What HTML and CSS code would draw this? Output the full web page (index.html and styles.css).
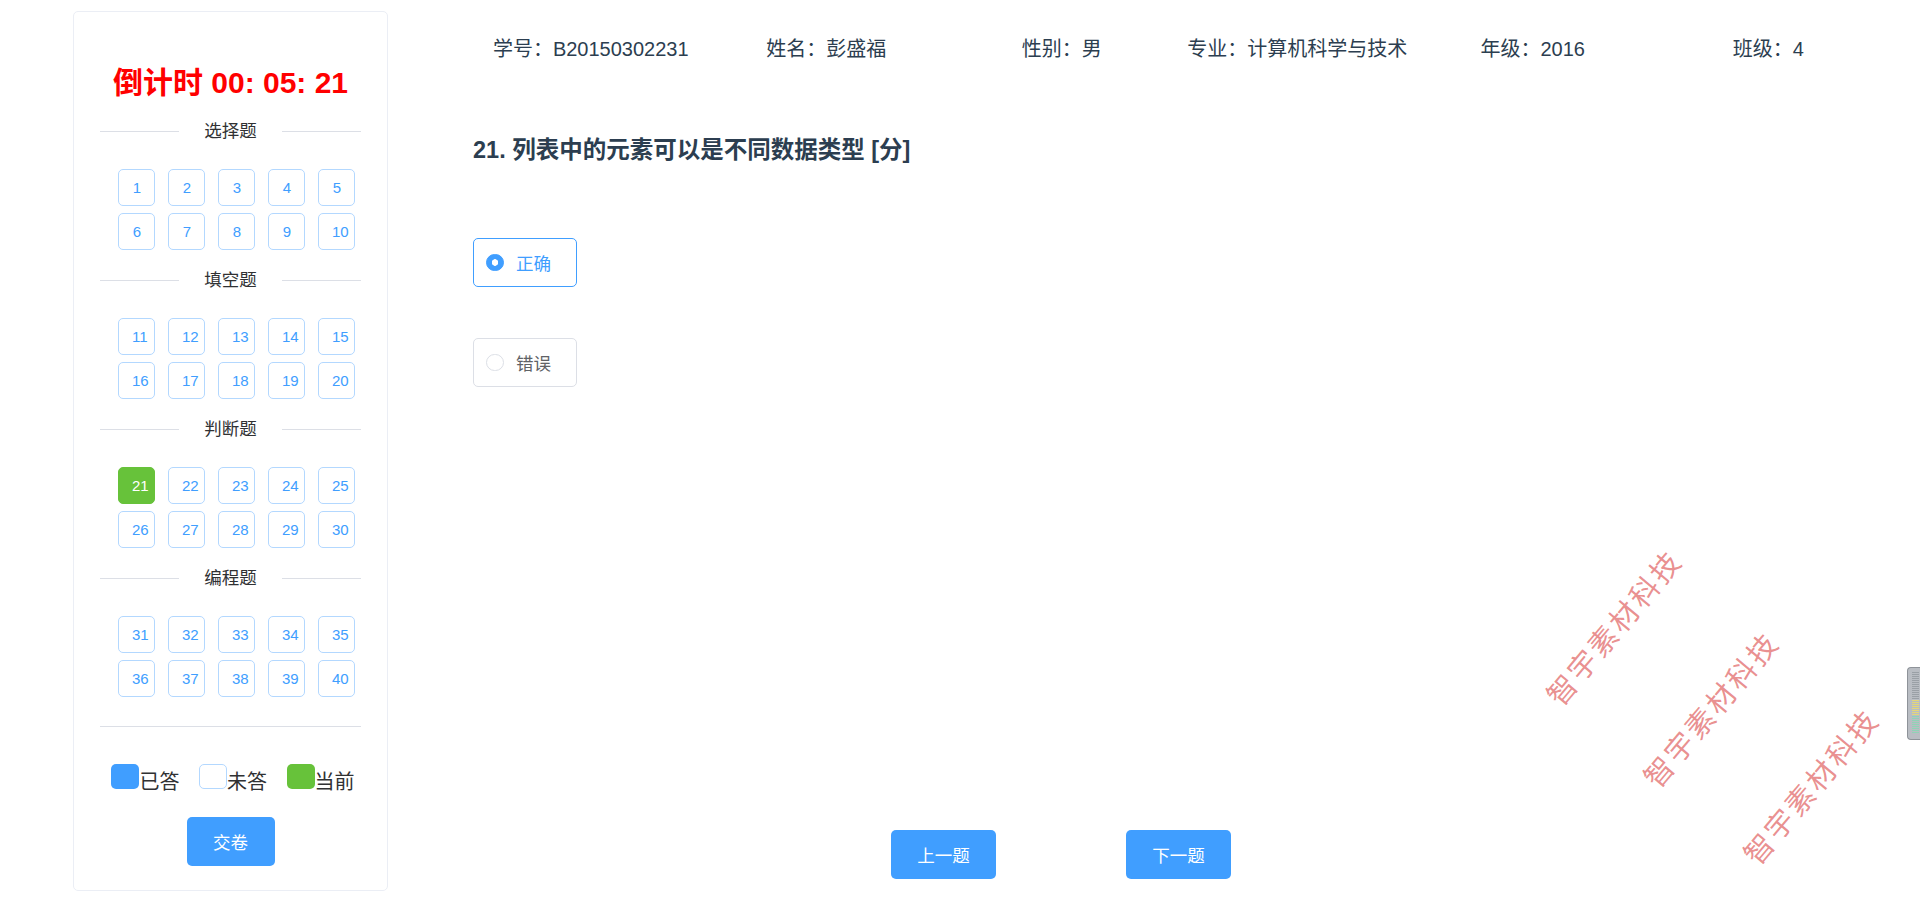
FILE: index.html
```html
<!DOCTYPE html>
<html lang="zh-CN">
<head>
    <meta charset="UTF-8">
    <title>在线考试</title>
    <link rel="stylesheet" href="styles.css">
</head>
<body>
    <div class="page">
        <aside class="card">
            <div class="timer">倒计时 00: 05: 21</div>

            <div class="divider"><span>选择题</span></div>
            <div class="qgrid">
                <div class="qbtn">1</div><div class="qbtn">2</div><div class="qbtn">3</div><div class="qbtn">4</div><div class="qbtn">5</div>
                <div class="qbtn">6</div><div class="qbtn">7</div><div class="qbtn">8</div><div class="qbtn">9</div><div class="qbtn">10</div>
            </div>

            <div class="divider"><span>填空题</span></div>
            <div class="qgrid">
                <div class="qbtn">11</div><div class="qbtn">12</div><div class="qbtn">13</div><div class="qbtn">14</div><div class="qbtn">15</div>
                <div class="qbtn">16</div><div class="qbtn">17</div><div class="qbtn">18</div><div class="qbtn">19</div><div class="qbtn">20</div>
            </div>

            <div class="divider"><span>判断题</span></div>
            <div class="qgrid">
                <div class="qbtn current">21</div><div class="qbtn">22</div><div class="qbtn">23</div><div class="qbtn">24</div><div class="qbtn">25</div>
                <div class="qbtn">26</div><div class="qbtn">27</div><div class="qbtn">28</div><div class="qbtn">29</div><div class="qbtn">30</div>
            </div>

            <div class="divider"><span>编程题</span></div>
            <div class="qgrid">
                <div class="qbtn">31</div><div class="qbtn">32</div><div class="qbtn">33</div><div class="qbtn">34</div><div class="qbtn">35</div>
                <div class="qbtn">36</div><div class="qbtn">37</div><div class="qbtn">38</div><div class="qbtn">39</div><div class="qbtn">40</div>
            </div>

            <div class="rule"></div>

            <div class="legend">
                <span class="key"><i class="swatch done"></i>已答</span>
                <span class="key"><i class="swatch todo"></i>未答</span>
                <span class="key"><i class="swatch now"></i>当前</span>
            </div>

            <button class="submit">交卷</button>
        </aside>

        <main class="main">
            <div class="info">
                <span>学号：B20150302231</span>
                <span>姓名：彭盛福</span>
                <span>性别：男</span>
                <span>专业：计算机科学与技术</span>
                <span>年级：2016</span>
                <span>班级：4</span>
            </div>

            <h3 class="title">21. 列表中的元素可以是不同数据类型 [分]</h3>

            <div class="options">
                <label class="opt checked"><span class="dot"></span>正确</label>
                <label class="opt"><span class="dot"></span>错误</label>
            </div>

            <div class="nav">
                <button class="nav-btn">上一题</button>
                <button class="nav-btn">下一题</button>
            </div>
        </main>
    </div>

    <div class="watermarks">
        <span class="wm wm1">智宇素材科技</span>
        <span class="wm wm2">智宇素材科技</span>
        <span class="wm wm3">智宇素材科技</span>
    </div>

    <div class="side-tab"><div class="meter"></div></div>
</body>
</html>
```

FILE: styles.css
```css
body {
    margin: 0;
    font-family: "Liberation Sans", "Noto Sans CJK SC", sans-serif;
    color: #2c3e50;
    background: #fff;
}
.page {
    display: flex;
    align-items: flex-start;
}

/* left panel */
.card {
    width: 315px;
    box-sizing: border-box;
    margin: 11px 0 0 73px;
    padding: 53px 0 24px;
    border: 1px solid #ebeef5;
    border-radius: 5px;
}
.timer {
    text-align: center;
    color: #f00;
    font-size: 30px;
    font-weight: bold;
    line-height: 36px;
}
.divider {
    display: flex;
    align-items: center;
    margin: 18px 26px 0;
    height: 24px;
    font-size: 17.5px;
    color: #303133;
}
.divider::before,
.divider::after {
    content: "";
    flex: 1;
    height: 1px;
    background: #dcdfe6;
}
.divider span {
    padding: 0 25px;
    line-height: 24px;
}
.qgrid {
    display: grid;
    grid-template-columns: repeat(5, 37px);
    gap: 7px 13px;
    margin-top: 26px;
    padding-left: 44px;
}
.qbtn {
    box-sizing: border-box;
    width: 37px;
    height: 37px;
    padding: 0 12px 0 13px;
    border: 1px solid #b3d8ff;
    border-radius: 5px;
    color: #409eff;
    font-size: 15px;
    line-height: 35px;
    text-align: center;
    white-space: nowrap;
    cursor: pointer;
}
.qbtn.current {
    background: #67c23a;
    border-color: #67c23a;
    color: #fff;
}
.rule {
    height: 1px;
    margin: 29px 26px 0;
    background: #dcdfe6;
}
.legend {
    margin-top: 37px;
    padding-left: 5px;
    text-align: center;
    font-size: 20px;
    line-height: 28px;
    color: #303133;
}
.key {
    display: inline-block;
    margin: 0 7px;
}
.swatch {
    display: inline-block;
    box-sizing: border-box;
    width: 28px;
    height: 25px;
    border-radius: 5px;
}
.swatch.done { background: #409eff; }
.swatch.todo { border: 1px solid #b3d8ff; background: #fff; }
.swatch.now { background: #67c23a; }
.submit {
    display: block;
    margin: 21px auto 0;
    width: 88px;
    height: 49px;
    border: none;
    border-radius: 5px;
    background: #409eff;
    color: #fff;
    font-family: inherit;
    font-size: 17.5px;
    cursor: pointer;
}

/* right side */
.main {
    width: 1413px;
    margin-left: 85px;
    padding-top: 35px;
}
.info {
    display: grid;
    grid-template-columns: repeat(6, 1fr);
    text-align: center;
    font-size: 20px;
    line-height: 28px;
}
.title {
    margin: 72px 0 0;
    font-size: 23.5px;
    line-height: 30px;
    font-weight: bold;
}
.options {
    display: flex;
    flex-direction: column;
    align-items: flex-start;
    gap: 51px;
    margin-top: 73px;
}
.opt {
    display: flex;
    align-items: center;
    box-sizing: border-box;
    width: 104px;
    height: 49px;
    padding-left: 12px;
    border: 1px solid #dcdfe6;
    border-radius: 5px;
    color: #606266;
    font-size: 17.5px;
    cursor: pointer;
}
.dot {
    box-sizing: border-box;
    width: 17.5px;
    height: 17.5px;
    margin-right: 12.5px;
    border: 1px solid #dcdfe6;
    border-radius: 50%;
    background: #fff;
}
.opt.checked {
    border-color: #409eff;
    color: #409eff;
}
.opt.checked .dot {
    border-color: #409eff;
    background: #409eff radial-gradient(circle, #fff 0 3px, transparent 3.5px);
}
.nav {
    display: flex;
    gap: 130px;
    margin-top: 443px;
    padding-left: 418px;
}
.nav-btn {
    width: 105px;
    height: 49px;
    border: none;
    border-radius: 5px;
    background: #409eff;
    color: #fff;
    font-family: inherit;
    font-size: 17.5px;
    cursor: pointer;
}

/* overlays */
.watermarks {
    position: absolute;
    top: 0;
    left: 0;
    width: 100%;
    height: 910px;
    pointer-events: none;
    overflow: hidden;
}
.wm {
    position: absolute;
    width: 200px;
    height: 40px;
    line-height: 40px;
    text-align: center;
    font-size: 29px;
    letter-spacing: 3px;
    color: rgba(214, 48, 49, 0.55);
    transform: rotate(-50deg);
}
.wm1 { left: 1515px; top: 608px; }
.wm2 { left: 1612px; top: 690px; }
.wm3 { left: 1712px; top: 767px; }
.side-tab {
    position: absolute;
    right: 0;
    top: 667px;
    width: 13px;
    height: 73px;
    box-sizing: border-box;
    border: 1px solid #8e9399;
    border-right: none;
    border-radius: 4px 0 0 4px;
    background: #b9bdc3;
}
.meter {
    margin: 4px 0 0 4px;
    width: 7px;
    height: 62px;
    background:
        repeating-linear-gradient(#0000 0 1px, #b9bdc3 1px 2px),
        linear-gradient(#9aa0a6 0 45%, #e3d77a 45% 70%, #8fd3b6 70%);
}
```
